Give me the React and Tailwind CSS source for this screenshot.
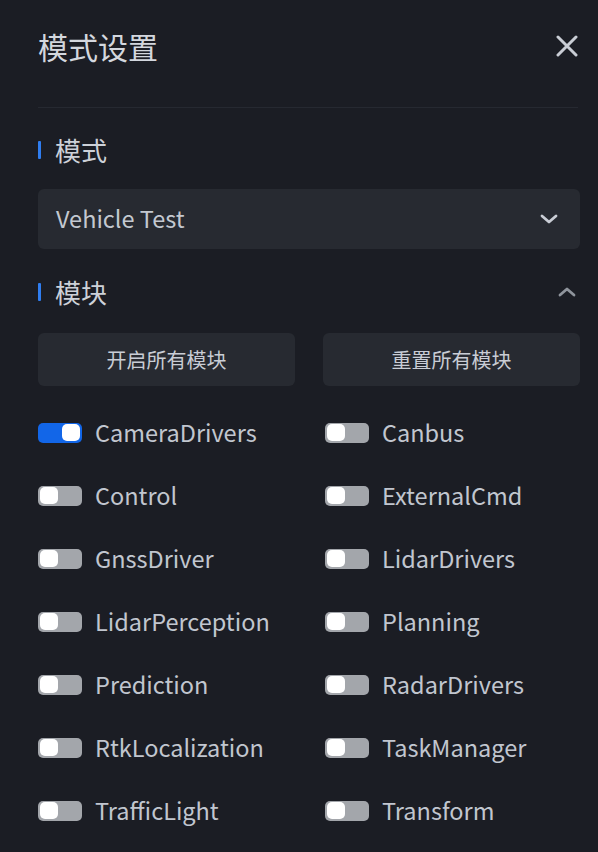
import React from 'react';

const modules = [
  ['CameraDrivers', true],
  ['Canbus', false],
  ['Control', false],
  ['ExternalCmd', false],
  ['GnssDriver', false],
  ['LidarDrivers', false],
  ['LidarPerception', false],
  ['Planning', false],
  ['Prediction', false],
  ['RadarDrivers', false],
  ['RtkLocalization', false],
  ['TaskManager', false],
  ['TrafficLight', false],
  ['Transform', false],
];

const Toggle = ({ on }) => (
  <div
    className={`w-[44px] h-[20px] rounded-[5px] flex items-center px-[2px] ${
      on ? 'bg-[#1266e8] justify-end' : 'bg-[#a3a6ab] justify-start'
    }`}
  >
    <div className="w-[18px] h-[17px] rounded-[5px] bg-white" />
  </div>
);

const SectionTitle = ({ children, right }) => (
  <div className="flex items-center h-[32px]">
    <div className="w-[3px] h-[18px] bg-[#2f7df0] rounded-[1px]" />
    <div className="ml-[14px] text-[26px] leading-[32px] text-[#cdd1d8]">{children}</div>
    {right && <div className="ml-auto">{right}</div>}
  </div>
);

const App = () => {
  return (
    <div
      className="w-[598px] h-[852px] overflow-hidden bg-[#1b1d24] pl-[38px] pr-[18px]"
      style={{ fontFamily: '"Noto Sans CJK SC", "Noto Sans", sans-serif' }}
    >
      <div className="pt-[28px] flex items-center h-[64px]">
        <div className="text-[30px] leading-[36px] text-[#d3d7de]">模式设置</div>
        <svg className="ml-auto mr-[2px]" width="22" height="22" viewBox="0 0 22 22">
          <path d="M2 2L20 20M20 2L2 20" stroke="#c9cdd5" strokeWidth="3" strokeLinecap="round" />
        </svg>
      </div>

      <div className="mt-[43px] h-px bg-[#262931] mr-[2px]" />

      <div className="mt-[26px]">
        <SectionTitle>模式</SectionTitle>
      </div>

      <div className="mt-[23px] h-[60px] rounded-[6px] bg-[#272a31] flex items-center pl-[18px] pr-[22px]">
        <span className="text-[23.5px] text-[#c3c8d0]">Vehicle Test</span>
        <svg className="ml-auto" width="18" height="12" viewBox="0 0 18 12">
          <path d="M2 3L9 9L16 3" stroke="#c9cdd5" strokeWidth="2.8" fill="none" strokeLinecap="round" strokeLinejoin="round" />
        </svg>
      </div>

      <div className="mt-[27px]">
        <SectionTitle
          right={
            <svg className="mr-[4px]" width="18" height="12" viewBox="0 0 18 12">
              <path d="M2 9L9 3L16 9" stroke="#8f949c" strokeWidth="2.8" fill="none" strokeLinecap="round" strokeLinejoin="round" />
            </svg>
          }
        >
          模块
        </SectionTitle>
      </div>

      <div className="mt-[25px] grid grid-cols-2 gap-x-[28px]">
        <button className="h-[53px] rounded-[6px] bg-[#272a31] text-[20px] text-[#c9cdd5]">开启所有模块</button>
        <button className="h-[53px] rounded-[6px] bg-[#272a31] text-[20px] text-[#c9cdd5]">重置所有模块</button>
      </div>

      <div className="mt-[15px] grid grid-cols-2 gap-x-[28px]">
        {modules.map(([name, on], i) => (
          <div key={name} className={`h-[63px] flex items-center ${i % 2 ? 'pl-[2px]' : ''}`}>
            <Toggle on={on} />
            <span className="ml-[13px] text-[23.5px] text-[#c1c6cf]">{name}</span>
          </div>
        ))}
      </div>
    </div>
  );
};

export default App;
